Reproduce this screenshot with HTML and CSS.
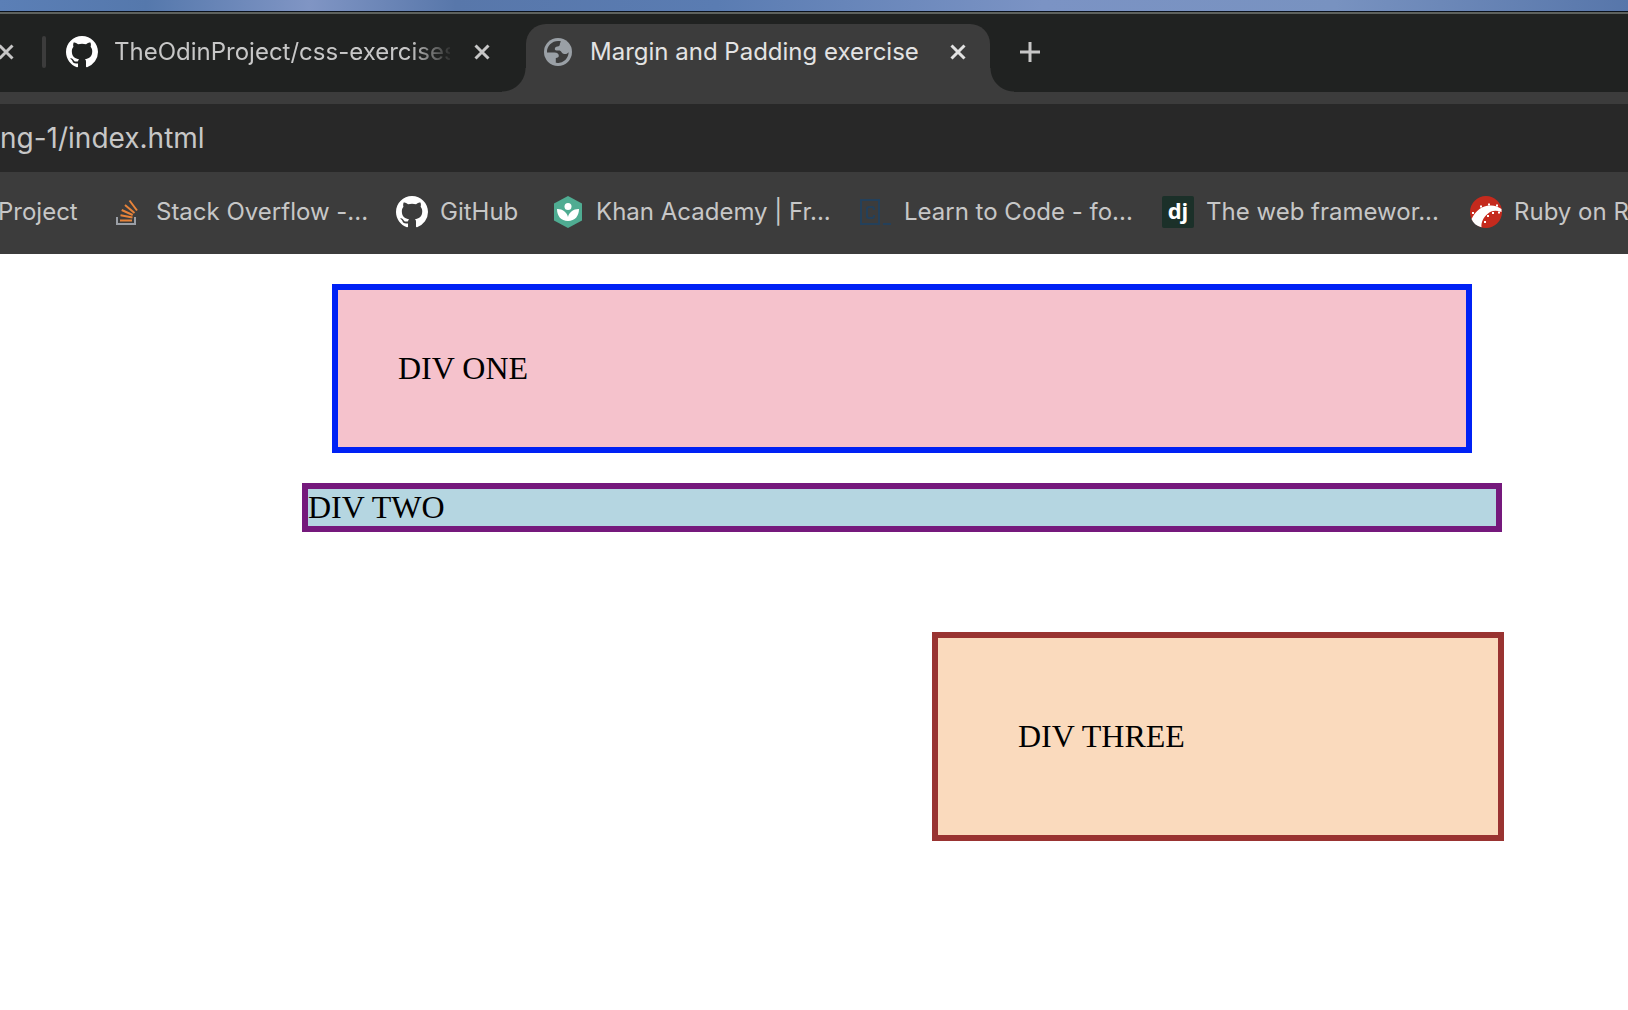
FILE: index.html
```html
<!DOCTYPE html>
<html lang="en">
<head>
<meta charset="utf-8">
<title>Margin and Padding exercise</title>
<link rel="stylesheet" href="styles.css">
</head>
<body>
<svg class="defs" aria-hidden="true">
  <symbol id="github" viewBox="0 0 16 16"><path d="M8 0C3.58 0 0 3.58 0 8c0 3.54 2.29 6.53 5.47 7.59.4.07.55-.17.55-.38 0-.19-.01-.82-.01-1.49-2.01.37-2.53-.49-2.69-.94-.09-.23-.48-.94-.82-1.13-.28-.15-.68-.52-.01-.53.63-.01 1.08.58 1.23.82.72 1.21 1.87.87 2.33.66.07-.52.28-.87.51-1.07-1.78-.2-3.64-.89-3.64-3.95 0-.87.31-1.59.82-2.15-.08-.2-.36-1.02.08-2.12 0 0 .67-.21 2.2.82a7.6 7.6 0 0 1 4 0c1.53-1.04 2.2-.82 2.2-.82.44 1.1.16 1.92.08 2.12.51.56.82 1.27.82 2.15 0 3.07-1.87 3.75-3.65 3.95.29.25.54.73.54 1.48 0 1.07-.01 1.93-.01 2.2 0 .21.15.46.55.38A8.01 8.01 0 0 0 16 8c0-4.42-3.58-8-8-8z"/></symbol>
  <symbol id="close" viewBox="0 0 16 16"><path d="M1.500 1.500l13 13M14.500 1.500l-13 13" fill="none" stroke="currentColor" stroke-width="3"/></symbol>
</svg>

<div class="wallpaper"></div>

<header>
  <nav class="tab-strip" aria-label="Tabs">
    <div class="tab tab-previous">
      <button class="icon-button" aria-label="Close tab"><svg class="close"><use href="#close"/></svg></button>
    </div>
    <span class="separator"></span>
    <div class="tab tab-inactive">
      <svg class="favicon" fill="#fff"><use href="#github"/></svg>
      <span class="title title-faded">TheOdinProject/css-exercises</span>
      <button class="icon-button" aria-label="Close tab"><svg class="close"><use href="#close"/></svg></button>
    </div>
    <div class="tab tab-active">
      <svg class="globe" viewBox="0 0 28 28"><circle cx="14" cy="14" r="14" fill="#9aa0a6"/><path d="M3 14.500h7.500c3 0 4.300 1.500 4.300 3.200 0 1.500-1 2-3 2.200v4.800c1 .3 7 .8 10.500-4 1.800-2.500 2.300-4.500 2.300-6.500-1.500 1.800-3 2-4.600 1.700-2-.3-2.300-2.200-3.500-3-1.200-.7-3-.3-4-.3-1.500 0-2-1.400-1.500-2.600.8-2 3.500-1 4.500-2.500.5-1 .3-2.700 1.500-4C10 1.600 2.500 7 3 14.500z" fill="#3c3c3c"/></svg>
      <span class="title">Margin and Padding exercise</span>
      <button class="icon-button" aria-label="Close tab"><svg class="close"><use href="#close"/></svg></button>
    </div>
    <button class="icon-button new-tab" aria-label="New tab"><svg class="plus" viewBox="0 0 20 20"><path d="M10 0v20M0 10h20" fill="none" stroke="currentColor" stroke-width="3"/></svg></button>
  </nav>

  <div class="toolbar">
    <input class="address" type="text" aria-label="Address" value="ng-1/index.html">
  </div>

  <nav class="bookmarks" aria-label="Bookmarks">
    <a class="bookmark bookmark-scrolled" href="#">Project</a>
    <a class="bookmark bookmark-medium" href="#">
      <svg class="favicon" viewBox="0 0 32 32"><path d="M5 21v7h18v-7" fill="none" stroke="#9b9fa6" stroke-width="2"/><path d="M8 24.500h12M8.500 19.200l12 2.300M9.700 14l11 5M13 9l9.500 8M17.500 4.500l7.500 10" fill="none" stroke="#e7833a" stroke-width="2"/></svg>
      Stack Overflow -...</a>
    <a class="bookmark bookmark-short" href="#"><svg class="favicon" fill="#fff"><use href="#github"/></svg>GitHub</a>
    <a class="bookmark" href="#">
      <svg class="favicon" viewBox="0 0 32 32"><path d="M16 0l14 7.500v17L16 32 2 24.500v-17z" fill="#4fac92"/><circle cx="16" cy="10.500" r="3.500" fill="#fff"/><path d="M5 13c5-.3 10 3 11 8 1-5 6-8.300 11-8 0 7-4 12-11 12S5 20 5 13z" fill="#fff"/></svg>
      Khan Academy | Fr...</a>
    <a class="bookmark bookmark-long" href="#">
      <svg class="favicon" viewBox="0 0 32 32" fill="none" stroke="#24405a" stroke-width="2"><path d="M1 4h18v24H1zM14 14v-1c0-1-1-2-2-2H9c-1 0-2 1-2 2v7c0 1 1 2 2 2h3c1 0 2-1 2-2v-1M23 28h8"/></svg>
      Learn to Code - fo...</a>
    <a class="bookmark" href="#"><span class="favicon django">dj</span>The web framewor...</a>
    <a class="bookmark" href="#">
      <svg class="favicon" viewBox="0 0 32 32"><circle cx="16" cy="16" r="16" fill="#c52a1d"/><path d="M1.500 23C6 14 13 9 21 9.500c4 .2 8 1.500 10.500 3.500v3c-5-2-10-2-14 2-4 3.500-6.500 8-6 13.300C6.500 30 3 27 1.500 23z" fill="#fff"/><path d="M2 17h2M10 10.500h2M18 8.500h2M26 9.500h2M28 16.500h2M22 17h2M17 20h2M14 26h2" stroke="#fff" stroke-width="2"/></svg>
      Ruby on Rails</a>
  </nav>
</header>

<main class="page">
  <div class="container">
    <div class="one">DIV ONE</div>
    <div class="two">DIV TWO</div>
    <div class="three">DIV THREE</div>
  </div>
</main>
</body>
</html>
```
FILE: styles.css
```css
* {
  box-sizing: border-box;
}

body {
  margin: 0;
  background: #fff;
  overflow-x: hidden;
}

.defs {
  display: none;
}

.wallpaper {
  height: 14px;
  border-bottom: 2px solid #5e625f;
  background:
    linear-gradient(#0b121c, #0b121c) bottom / 100% 1px no-repeat,
    linear-gradient(90deg, #5b7fb6, #5578ac 9%, #8095c4 19%, #5877aa 28%, #5a7cb2 44%, #7b93c4 64%, #7892c0 82%, #5776aa);
}

header {
  font-family: Inter, "Liberation Sans", sans-serif;
  font-size: 24px;
  line-height: 32px;
  color: #c7c7c7;
  background: #3c3c3c;
}

/* Tab strip */
.tab-strip {
  display: flex;
  padding-top: 10px;
  background: #202221;
}

.tab,
.new-tab,
.separator {
  margin-bottom: 12px;
}

.tab {
  display: flex;
  align-items: center;
  height: 56px;
}

.tab-previous {
  margin-left: -2px;
}

.separator {
  align-self: center;
  width: 4px;
  height: 32px;
  margin-left: 28px;
  margin-right: 20px;
  border-radius: 2px;
  background: #3c3c3c;
}

.tab-inactive {
  gap: 16px;
  padding-right: 36px;
}

.title {
  white-space: nowrap;
}

.title-faded {
  width: 336px;
  margin-right: 8px;
  overflow: hidden;
  mask-image: linear-gradient(90deg, #000 296px, transparent 340px);
}

.tab-active {
  position: relative;
  gap: 18px;
  width: 464px;
  height: 68px;
  margin-bottom: 0;
  padding: 0 24px 12px 18px;
  border-radius: 20px 20px 0 0;
  color: #e3e3e3;
  background: #3c3c3c;
}

.tab-active .icon-button {
  margin-left: auto;
}

.tab-active::before,
.tab-active::after {
  content: "";
  position: absolute;
  bottom: 0;
  width: 24px;
  height: 24px;
}

.tab-active::before {
  right: 100%;
  background: radial-gradient(circle at 0 0, transparent 23px, #3c3c3c 24px);
}

.tab-active::after {
  left: 100%;
  background: radial-gradient(circle at 100% 0, transparent 23px, #3c3c3c 24px);
}

.icon-button {
  display: flex;
  align-items: center;
  padding: 0;
  border: 0;
  color: inherit;
  background: none;
}

.new-tab {
  margin-left: 30px;
}

.close {
  width: 16px;
  height: 16px;
}

.plus {
  width: 20px;
  height: 20px;
}

.globe {
  flex: none;
  width: 28px;
  height: 28px;
}

.favicon {
  flex: none;
  width: 32px;
  height: 32px;
}

/* Address bar */
.toolbar {
  padding-top: 12px;
}

.address {
  display: block;
  width: 100%;
  height: 68px;
  padding: 0;
  border: 0;
  outline: 0;
  font: 28px Inter, "Liberation Sans", sans-serif;
  color: #c7c7c7;
  background: #282828;
}

/* Bookmarks bar */
.bookmarks {
  display: flex;
  padding: 24px 0 26px;
  overflow: hidden;
}

.bookmark {
  display: flex;
  flex: none;
  gap: 12px;
  width: 308px;
  color: inherit;
  text-decoration: none;
  white-space: nowrap;
}

.bookmark-scrolled {
  width: 114px;
  margin-left: -2px;
}

.bookmark-short {
  width: 156px;
}

.bookmark-medium {
  width: 284px;
}

.bookmark-long {
  width: 302px;
}

.django {
  border-radius: 2px;
  font-family: "Open Sans", sans-serif;
  font-size: 22px;
  font-weight: 700;
  line-height: 28px;
  text-align: center;
  color: #fff;
  background: #1b3029;
}

/* Page content */
.page {
  padding: 30px 0 30px 176px;
  font-family: "Liberation Serif", serif;
  font-size: 32px;
  line-height: 37px;
  color: #000;
}

.container {
  max-width: 1200px;
  margin: 0 auto;
}

.one {
  margin: 0 30px 30px;
  padding: 60px;
  border: 6px solid #0021f5;
  background: #f5c2cc;
}

.two {
  margin-bottom: 100px;
  border: 6px solid #75197c;
  background: #b5d6e1;
}

.three {
  width: 572px;
  margin: 0 -2px 0 auto;
  padding: 80px;
  border: 6px solid #993331;
  background: #fadabd;
}
```
